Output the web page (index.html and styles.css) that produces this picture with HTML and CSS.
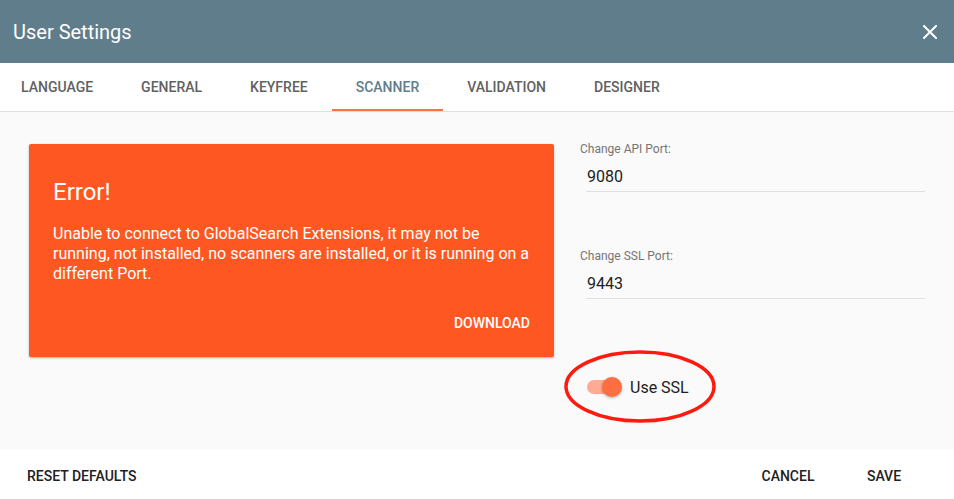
FILE: index.html
```html
<!DOCTYPE html>
<html lang="en">
<head>
  <meta charset="UTF-8" />
  <meta name="viewport" content="width=device-width, initial-scale=1.0"/>
  <title>User Settings</title>
  <link rel="stylesheet" href="styles.css">
</head>
<body>
  <div class="dialog">
    <header class="dialog-header">
      <h1>User Settings</h1>
      <button class="close" aria-label="Close">
        <svg width="14" height="14" viewBox="0 0 14 14">
          <path d="M1 1 L13 13 M13 1 L1 13" stroke="#fff" stroke-width="2" stroke-linecap="square"/>
        </svg>
      </button>
    </header>

    <nav class="tabs">
      <a class="tab">Language</a>
      <a class="tab">General</a>
      <a class="tab">Keyfree</a>
      <a class="tab active">Scanner</a>
      <a class="tab">Validation</a>
      <a class="tab">Designer</a>
    </nav>

    <main class="content">
      <div class="error-card">
        <h2>Error!</h2>
        <p>Unable to connect to GlobalSearch Extensions, it may not be running, not installed, no scanners are installed, or it is running on a different Port.</p>
        <div class="card-actions">
          <button class="flat-btn light">Download</button>
        </div>
      </div>

      <div class="settings">
        <div class="field">
          <label for="api-port">Change API Port:</label>
          <input id="api-port" type="text" value="9080">
        </div>
        <div class="field">
          <label for="ssl-port">Change SSL Port:</label>
          <input id="ssl-port" type="text" value="9443">
        </div>
        <div class="switch-row">
          <span class="switch">
            <span class="track"></span>
            <span class="thumb"></span>
          </span>
          <span class="switch-label">Use SSL</span>
          <!-- red marker circled round the SSL switch -->
          <svg class="marker" width="156" height="78" viewBox="0 0 156 78">
            <ellipse cx="78" cy="38.5" rx="74" ry="34.5" fill="none" stroke="#ff1a0f" stroke-width="3.5"/>
          </svg>
        </div>
      </div>
    </main>

    <footer class="dialog-actions">
      <button class="flat-btn">Reset Defaults</button>
      <div class="right-actions">
        <button class="flat-btn">Cancel</button>
        <button class="flat-btn">Save</button>
      </div>
    </footer>
  </div>
</body>
</html>
```

FILE: styles.css
```css
body {
  margin: 0;
  font-family: Roboto, "Liberation Sans", Arial, sans-serif;
  background-color: #fff;
  overflow: hidden;
}

.dialog {
  width: 954px;
  height: 499px;
  display: flex;
  flex-direction: column;
}

/* title bar */
.dialog-header {
  height: 63px;
  background-color: #607d8b;
  display: flex;
  align-items: center;
  justify-content: space-between;
  padding: 0 17px 0 13px;
  box-sizing: border-box;
}

.dialog-header h1 {
  margin: 0;
  font-size: 20px;
  font-weight: 400;
  color: #fff;
}

.close {
  background: none;
  border: 0;
  padding: 0;
  width: 14px;
  height: 14px;
  margin-top: 1px;
  display: flex;
  cursor: pointer;
}

/* tab strip */
.tabs {
  display: flex;
  height: 48px;
  border-bottom: 1px solid #e0e0e0;
  margin-left: -3px;
}

.tab {
  display: flex;
  align-items: center;
  padding: 0 24px;
  font-size: 14px;
  font-weight: 500;
  text-transform: uppercase;
  color: #616161;
  box-sizing: border-box;
  cursor: pointer;
}

.tab.active {
  color: #607d8b;
  border-bottom: 2px solid #ff7043;
  padding-top: 2px;
}

/* body */
.content {
  flex: 1;
  background-color: #fafafa;
  display: grid;
  grid-template-columns: 525px 1fr;
  column-gap: 26px;
  align-items: start;
  padding: 32px 29px 0;
}

.error-card {
  background-color: #ff5722;
  color: #fff;
  border-radius: 2px;
  padding: 32px 0 16px;
  box-shadow: 0 1px 3px rgba(0, 0, 0, 0.2), 0 1px 1px rgba(0, 0, 0, 0.12);
}

.error-card h2 {
  margin: 0 24px 16px;
  font-size: 24px;
  line-height: 32px;
  font-weight: 400;
}

.error-card p {
  margin: 0 24px;
  font-size: 16px;
  line-height: 20px;
}

.card-actions {
  display: flex;
  justify-content: flex-end;
  padding: 0 8px;
  margin-top: 21px;
}

.flat-btn {
  min-width: 88px;
  height: 36px;
  padding: 0 16px;
  background: none;
  border: 0;
  font-family: inherit;
  font-size: 14px;
  font-weight: 500;
  text-transform: uppercase;
  color: #212121;
  cursor: pointer;
}

.flat-btn.light {
  color: #fff;
  padding: 0 16px 0 0;
}

/* port fields */
.settings {
  margin-top: -2px;
}

.field {
  display: flex;
  flex-direction: column;
  margin-bottom: 57px;
}

.field label {
  font-size: 12px;
  line-height: 14px;
  color: #757575;
}

.field input {
  margin: 0 0 0 6px;
  padding: 11px 0 4px 1px;
  height: 20px;
  font-family: inherit;
  font-size: 16px;
  line-height: 20px;
  color: #212121;
  background: transparent;
  border: 0;
  border-bottom: 1px solid #e0e0e0;
  outline: none;
}

.switch-row {
  position: relative;
  display: flex;
  align-items: center;
  margin: 78px 0 0 7px;
  height: 20px;
}

.switch {
  position: relative;
  width: 35px;
  height: 20px;
}

.track {
  position: absolute;
  left: 0;
  top: 3px;
  width: 34px;
  height: 14px;
  border-radius: 7px;
  background-color: #ffab91;
}

.thumb {
  position: absolute;
  right: 0;
  top: 0;
  width: 20px;
  height: 20px;
  border-radius: 50%;
  background-color: #ff6e40;
  box-shadow: 0 1px 3px rgba(0, 0, 0, 0.3);
}

.switch-label {
  margin-left: 8px;
  font-size: 16px;
  color: #212121;
}

.marker {
  position: absolute;
  left: -25px;
  top: -29px;
  filter: blur(0.5px);
  pointer-events: none;
}

/* bottom buttons */
.dialog-actions {
  height: 50px;
  display: flex;
  align-items: center;
  justify-content: space-between;
  padding: 4px 26px 0 11px;
  box-sizing: border-box;
}

.right-actions {
  display: flex;
  gap: 8px;
}
```
